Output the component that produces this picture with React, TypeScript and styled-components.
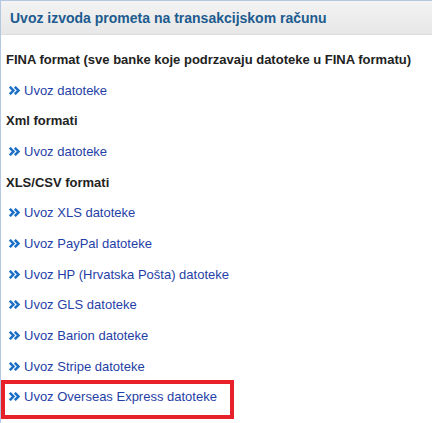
import React from 'react';
import styled, { createGlobalStyle } from 'styled-components';

const GlobalStyle = createGlobalStyle`
  html, body {
    margin: 0;
    padding: 0;
    background: #ffffff;
  }
  body {
    font-family: "Liberation Sans", Arial, sans-serif;
  }
`;

interface Item {
  kind: 'heading' | 'link';
  text: string;
  highlight?: boolean;
}

const items: Item[] = [
  { kind: 'heading', text: 'FINA format (sve banke koje podrzavaju datoteke u FINA formatu)' },
  { kind: 'link', text: 'Uvoz datoteke' },
  { kind: 'heading', text: 'Xml formati' },
  { kind: 'link', text: 'Uvoz datoteke' },
  { kind: 'heading', text: 'XLS/CSV formati' },
  { kind: 'link', text: 'Uvoz XLS datoteke' },
  { kind: 'link', text: 'Uvoz PayPal datoteke' },
  { kind: 'link', text: 'Uvoz HP (Hrvatska Pošta) datoteke' },
  { kind: 'link', text: 'Uvoz GLS datoteke' },
  { kind: 'link', text: 'Uvoz Barion datoteke' },
  { kind: 'link', text: 'Uvoz Stripe datoteke' },
  { kind: 'link', text: 'Uvoz Overseas Express datoteke', highlight: true },
];

const Chevrons: React.FC = () => (
  <svg width="11" height="9" viewBox="0 0 11 9" aria-hidden="true">
    <path d="M0.8 0.8 L4.4 4.5 L0.8 8.2" fill="none" stroke="#1b6fc4" strokeWidth="2.5" />
    <path d="M5.8 0.8 L9.4 4.5 L5.8 8.2" fill="none" stroke="#1b6fc4" strokeWidth="2.5" />
  </svg>
);

const App: React.FC = () => {
  return (
    <>
      <GlobalStyle />
      <Panel>
        <Header>Uvoz izvoda prometa na transakcijskom računu</Header>
        <Content>
          {items.map((item, i) =>
            item.kind === 'heading' ? (
              <Heading key={i}>{item.text}</Heading>
            ) : (
              <LinkRow key={i} $highlight={item.highlight}>
                <Chevrons />
                <a href="#">{item.text}</a>
              </LinkRow>
            )
          )}
        </Content>
      </Panel>
    </>
  );
};

const Panel = styled.div`
  width: 432px;
  height: 423px;
  box-sizing: border-box;
  border-left: 1px solid #b4c8e4;
  border-top: 1px solid #b4c8e4;
  overflow: hidden;
`;

const Header = styled.div`
  height: 33px;
  display: flex;
  align-items: center;
  padding-left: 9px;
  background: linear-gradient(#f3f3f3, #e7e7e7);
  border-bottom: 1px solid #dcdcdc;
  color: #1d5b8f;
  font-size: 14px;
  font-weight: 700;
`;

const Content = styled.div`
  display: flex;
  flex-direction: column;
  padding: 9px 0 0 5px;
`;

const Heading = styled.div`
  height: 30.7px;
  display: flex;
  align-items: center;
  color: #222222;
  font-size: 13px;
  font-weight: 700;
`;

const LinkRow = styled.div<{ $highlight?: boolean }>`
  position: relative;
  height: 30.7px;
  display: flex;
  align-items: center;
  gap: 4px;
  padding-left: 3px;

  a {
    color: #1f3fa6;
    font-size: 13px;
    text-decoration: none;
  }

  ${({ $highlight }) =>
    $highlight &&
    `
    &::after {
      content: '';
      position: absolute;
      left: -5px;
      top: -2px;
      width: 233px;
      height: 39px;
      box-sizing: border-box;
      border: 4px solid #e8202a;
    }
  `}
`;

export default App;
